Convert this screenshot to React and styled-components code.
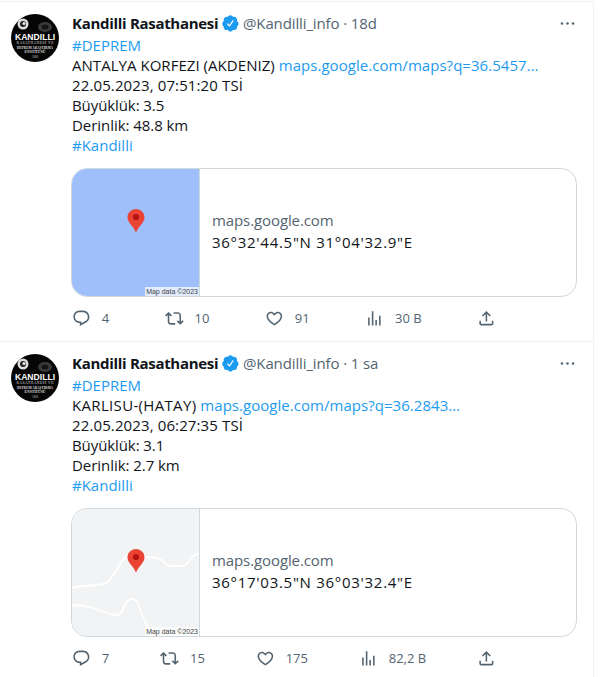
import React from 'react';
import styled, { createGlobalStyle } from 'styled-components';

const Global = createGlobalStyle`
  html, body { margin: 0; padding: 0; background: #fff; }
  body { font-family: "Open Sans", "Noto Sans", sans-serif; color: #0f1419; }
`;

const Timeline = styled.div`
  width: 593px;
  margin-top: 1px;
  border-top: 1px solid #eff3f4;
  border-right: 1px solid #eff3f4;
  height: 675px;
  overflow: hidden;
`;

const Tweet = styled.article`
  display: flex;
  height: 339px;
  box-sizing: content-box;
  padding: 0 16px 0 11px;
  border-bottom: 1px solid #eff3f4;
  gap: 13px;
`;

const AvatarBox = styled.div`
  flex: none;
  width: 48px;
  height: 48px;
  margin-top: 12px;
`;

const Body = styled.div`
  flex: 1;
  min-width: 0;
  padding-top: 11px;
`;

const Header = styled.div`
  display: flex;
  align-items: center;
  height: 20px;
  font-size: 15px;
  line-height: 20px;
`;

const Name = styled.span`
  font-weight: 700;
  letter-spacing: -0.3px;
  color: #0f1419;
`;

const Badge = styled.svg`
  width: 18.75px;
  height: 18.75px;
  margin: 0 3px 0 3px;
  fill: #1d9bf0;
`;

const Handle = styled.span`
  color: #536471;
  letter-spacing: -0.12px;
`;

const More = styled.svg`
  width: 19px;
  height: 19px;
  margin-left: auto;
  fill: #536471;
`;

const Text = styled.div`
  margin-top: 2px;
  font-size: 15px;
  line-height: 20px;
  color: #0f1419;
`;

const Line = styled.div`
  white-space: nowrap;
  letter-spacing: ${p => p.$spacing || '0'};
`;

const Place = styled.span`
  letter-spacing: ${p => p.$spacing};
`;

const Link = styled.span`
  color: #1d9bf0;
  letter-spacing: ${p => p.$spacing || '0'};
`;

const Card = styled.div`
  display: flex;
  width: 506px;
  height: 129px;
  margin-top: 13px;
  margin-left: -1px;
  box-sizing: border-box;
  border: 1px solid #cfd9de;
  border-radius: 16px;
  overflow: hidden;
`;

const Media = styled.div`
  position: relative;
  flex: none;
  width: 127px;
  height: 127px;
  background: ${p => p.$bg};
  border-right: 1px solid #cfd9de;
`;

const MapSvg = styled.svg`
  display: block;
  width: 127px;
  height: 127px;
`;

const MapData = styled.span`
  position: absolute;
  right: 0;
  bottom: 0;
  padding: 0 1px;
  font-family: "Liberation Sans", Arial, sans-serif;
  font-size: 7px;
  line-height: 9px;
  height: 9px;
  color: #444;
  background: rgba(255, 255, 255, 0.7);
`;

const CardBody = styled.div`
  display: flex;
  flex-direction: column;
  justify-content: center;
  gap: 2px;
  padding: 0 12px 4px;
  font-size: 15px;
  line-height: 20px;
`;

const Domain = styled.div`
  color: #536471;
  letter-spacing: -0.1px;
`;

const Title = styled.div`
  color: #0f1419;
  letter-spacing: 0.72px;
`;

const Actions = styled.div`
  display: flex;
  justify-content: space-between;
  width: 424px;
  margin-top: 11px;
  height: 20px;
  align-items: center;
`;

const Action = styled.div`
  display: flex;
  align-items: center;
  color: #536471;
  font-size: 13px;
  line-height: 16px;
`;

const Icon = styled.svg`
  width: 18.75px;
  height: 18.75px;
  fill: #536471;
`;

const Count = styled.span`
  padding-left: 11px;
`;

const paths = {
  reply: 'M1.751 10c0-4.42 3.584-8 8.005-8h4.366c4.49 0 8.129 3.64 8.129 8.13 0 2.96-1.607 5.68-4.196 7.11l-8.054 4.46v-3.69h-.067c-4.49.1-8.183-3.51-8.183-8.01zm8.005-6c-3.317 0-6.005 2.69-6.005 6 0 3.37 2.77 6.08 6.138 6.01l.351-.01h1.761v2.3l5.087-2.81c1.951-1.08 3.163-3.13 3.163-5.36 0-3.39-2.744-6.13-6.129-6.13H9.756z',
  retweet: 'M4.5 3.88l4.432 4.14-1.364 1.46L5.5 7.55V16c0 1.1.896 2 2 2H13v2H7.5c-2.209 0-4-1.79-4-4V7.55L1.432 9.48.068 8.02 4.5 3.88zM16.5 6H11V4h5.5c2.209 0 4 1.79 4 4v8.45l2.068-1.93 1.364 1.46-4.432 4.14-4.432-4.14 1.364-1.46 2.068 1.93V8c0-1.1-.896-2-2-2z',
  like: 'M16.697 5.5c-1.222-.06-2.679.51-3.89 2.16l-.805 1.09-.806-1.09C9.984 6.01 8.526 5.44 7.304 5.5c-1.243.07-2.349.78-2.91 1.91-.552 1.12-.633 2.78.479 4.82 1.074 1.97 3.257 4.27 7.129 6.61 3.87-2.34 6.052-4.64 7.126-6.61 1.111-2.04 1.03-3.7.477-4.82-.561-1.13-1.666-1.84-2.908-1.91zm4.187 7.69c-1.351 2.48-4.001 5.12-8.379 7.67l-.503.3-.504-.3c-4.379-2.55-7.029-5.19-8.382-7.67-1.36-2.5-1.41-4.86-.514-6.67.887-1.79 2.647-2.91 4.601-3.01 1.651-.09 3.368.56 4.798 2.01 1.429-1.45 3.146-2.1 4.796-2.01 1.954.1 3.714 1.22 4.601 3.01.896 1.81.846 4.17-.514 6.67z',
  views: 'M8.75 21V3h2v18h-2zM18 21V8.5h2V21h-2zM4 21l.004-10h2L6 21H4zm9.248 0v-7h2v7h-2z',
  share: 'M12 2.59l5.7 5.7-1.41 1.42L13 6.41V16h-2V6.41l-3.3 3.3-1.41-1.42L12 2.59zM21 15l-.02 3.51c0 1.38-1.12 2.49-2.5 2.49H5.5C4.11 21 3 19.88 3 18.5V15h2v3.5c0 .28.22.5.5.5h12.98c.28 0 .5-.22.5-.5L19 15h2z',
  badge: 'M22.5 12.5c0-1.58-.875-2.95-2.148-3.6.154-.435.238-.905.238-1.4 0-2.21-1.71-3.998-3.818-3.998-.47 0-.92.084-1.336.25C14.818 2.415 13.51 1.5 12 1.5s-2.816.917-3.437 2.25c-.415-.165-.866-.25-1.336-.25-2.11 0-3.818 1.79-3.818 4 0 .494.083.964.237 1.4-1.272.65-2.147 2.018-2.147 3.6 0 1.495.782 2.798 1.942 3.486-.02.17-.032.34-.032.514 0 2.21 1.708 4 3.818 4 .47 0 .92-.086 1.335-.25.62 1.334 1.926 2.25 3.437 2.25 1.512 0 2.818-.916 3.437-2.25.415.163.865.248 1.336.248 2.11 0 3.818-1.79 3.818-4 0-.174-.012-.344-.033-.513 1.158-.687 1.943-1.99 1.943-3.484zm-6.616-3.334l-4.334 6.5c-.145.217-.382.334-.625.334-.143 0-.288-.04-.416-.126l-.115-.094-2.415-2.415c-.293-.293-.293-.768 0-1.06s.768-.294 1.06 0l1.77 1.767 3.825-5.74c.23-.345.696-.436 1.04-.207.346.23.44.696.21 1.04z',
};

const Avatar = () => (
  <svg width="48" height="48" viewBox="0 0 48 48">
    <circle cx="24" cy="24" r="24" fill="#050505" />
    <circle cx="12" cy="10" r="5.500" fill="#ddd" />
    <circle cx="12" cy="10" r="3" fill="#222" />
    <circle cx="13" cy="9.500" r="1.500" fill="#eee" />
    <ellipse cx="34" cy="13" rx="7" ry="5" fill="#3a3a3a" />
    <ellipse cx="34" cy="13" rx="3.500" ry="2.500" fill="#151515" />
    <text x="24" y="26" textAnchor="middle" fontFamily="Liberation Sans" fontWeight="700" fontSize="8.600" fill="#fff">KANDILLI</text>
    <text x="24" y="30" textAnchor="middle" fontFamily="Liberation Serif" fontSize="3.800" textLength="37" lengthAdjust="spacing" fill="#ddd">RASATHANESİ VE</text>
    <text x="24" y="34.500" textAnchor="middle" fontFamily="Liberation Serif" fontWeight="700" fontSize="3.400" textLength="36" lengthAdjust="spacingAndGlyphs" fill="#ddd">DEPREM ARAŞTIRMA</text>
    <text x="24" y="38.500" textAnchor="middle" fontFamily="Liberation Serif" fontWeight="700" fontSize="3.400" textLength="21" lengthAdjust="spacingAndGlyphs" fill="#ddd">ENSTİTÜSÜ</text>
    <text x="24" y="44" textAnchor="middle" fontFamily="Liberation Serif" fontSize="3" fill="#bbb">1868</text>
  </svg>
);

const Pin = () => (
  <g>
    <path d="M64 40c-4.700 0-8.500 3.800-8.500 8.300 0 2.600 1.100 4.600 2.800 6.600 2.600 3 4.600 5.400 5.700 8.900 1.100-3.500 3.100-5.900 5.700-8.900 1.700-2 2.800-4 2.800-6.600 0-4.500-3.800-8.300-8.500-8.300z" fill="#ea4335" />
    <circle cx="64" cy="48" r="3.100" fill="#b31412" />
  </g>
);

const Roads = () => (
  <g fill="none" stroke="#fff" strokeWidth="1.800">
    <path d="M0 79c10-3 22-2 31-4 5-1 7-5 10-9 4-5 7-11 10-15 3-4 6-6 9-6 4 0 7 3 11 3 6 0 12 0 17 2 4 2 6 7 10 7h13c4 0 6-6 9-9 2-2 5-3 7-3" />
    <path d="M0 96c8 0 14 1 21 3 8 2 16 7 24 7 4 0 5-3 6-6 2-5 5-10 9-10 3 0 5 2 6 5l10 25 4 8" />
  </g>
);

const tweets = [
  {
    id: 1, time: '18d', place: 'ANTALYA KORFEZI (AKDENIZ)', placeSpacing: '0.04px', link: 'maps.google.com/maps?q=36.5457…',
    date: '22.05.2023, 07:51:20 TSİ', mag: '3.5', depth: '48.8 km', coords: '36°32\'44.5"N 31°04\'32.9"E',
    bg: '#9ebffa', roads: false, counts: ['4', '10', '91', '30 B'],
  },
  {
    id: 2, time: '1 sa', place: 'KARLISU-(HATAY)', placeSpacing: '0.33px', link: 'maps.google.com/maps?q=36.2843…',
    date: '22.05.2023, 06:27:35 TSİ', mag: '3.1', depth: '2.7 km', coords: '36°17\'03.5"N 36°03\'32.4"E',
    bg: '#f1f3f4', roads: true, counts: ['7', '15', '175', '82,2 B'],
  },
];

const icons = ['reply', 'retweet', 'like', 'views'];

export default function App() {
  return (
    <>
      <Global />
      <Timeline>
        {tweets.map(t => (
          <Tweet key={t.id}>
            <AvatarBox><Avatar /></AvatarBox>
            <Body>
              <Header>
                <Name>Kandilli Rasathanesi</Name>
                <Badge viewBox="0 0 24 24"><path d={paths.badge} /></Badge>
                <Handle>@Kandilli_info · {t.time}</Handle>
                <More viewBox="0 0 24 24">
                  <circle cx="5" cy="12" r="1.600" />
                  <circle cx="12" cy="12" r="1.600" />
                  <circle cx="19" cy="12" r="1.600" />
                </More>
              </Header>
              <Text>
                <Line><Link>#DEPREM</Link></Line>
                <Line><Place $spacing={t.placeSpacing}>{t.place}</Place> <Link $spacing="0.04px">{t.link}</Link></Line>
                <Line $spacing="0.12px">{t.date}</Line>
                <Line $spacing="-0.09px">Büyüklük: {t.mag}</Line>
                <Line $spacing="-0.05px">Derinlik: {t.depth}</Line>
                <Line><Link>#Kandilli</Link></Line>
              </Text>
              <Card>
                <Media $bg={t.bg}>
                  <MapSvg viewBox="0 0 127 127">
                    {t.roads && <Roads />}
                    <Pin />
                  </MapSvg>
                  <MapData>Map data ©2023</MapData>
                </Media>
                <CardBody>
                  <Domain>maps.google.com</Domain>
                  <Title>{t.coords}</Title>
                </CardBody>
              </Card>
              <Actions>
                {icons.map((k, i) => (
                  <Action key={k}>
                    <Icon viewBox="0 0 24 24"><path d={paths[k]} /></Icon>
                    <Count>{t.counts[i]}</Count>
                  </Action>
                ))}
                <Action>
                  <Icon viewBox="0 0 24 24"><path d={paths.share} /></Icon>
                </Action>
              </Actions>
            </Body>
          </Tweet>
        ))}
      </Timeline>
    </>
  );
}
